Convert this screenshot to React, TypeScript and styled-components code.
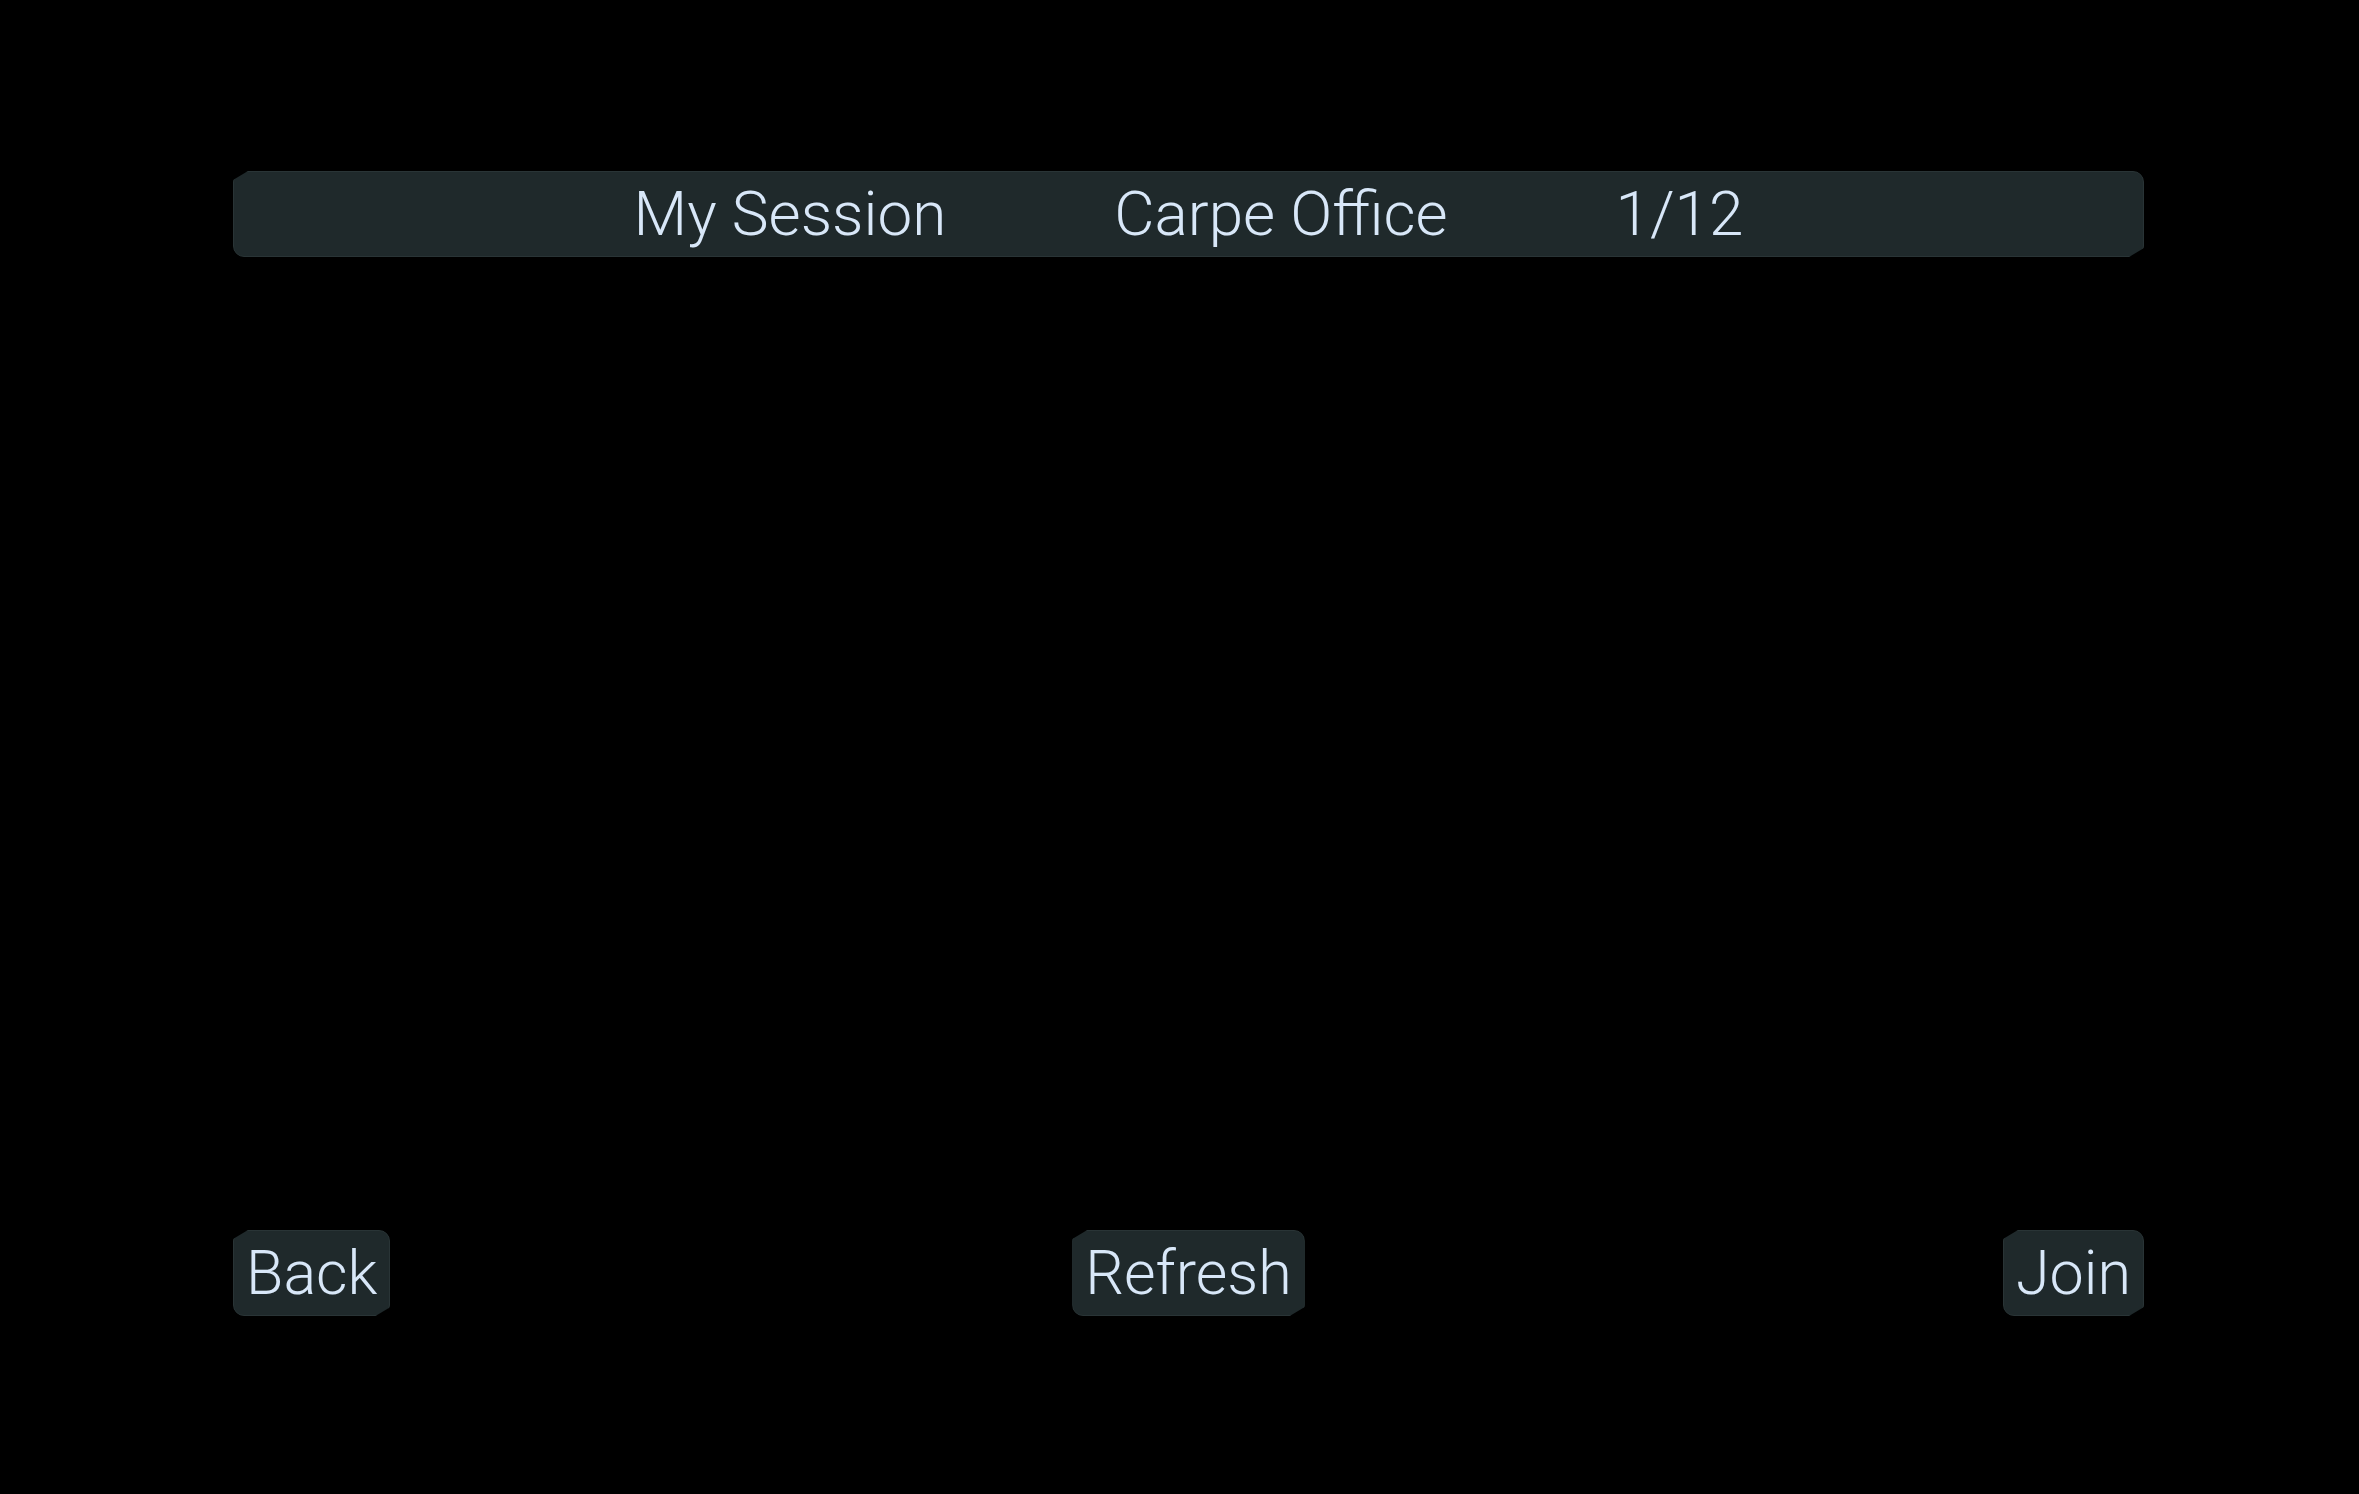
import React from "react";
import styled, { createGlobalStyle } from "styled-components";

const GlobalStyle = createGlobalStyle`
  html, body {
    margin: 0;
    padding: 0;
    background: #000000;
  }
  body {
    font-family: Roboto, "Liberation Sans", sans-serif;
  }
`;

const Page = styled.div`
  width: 2359px;
  height: 1494px;
  background: #000000;
  box-sizing: border-box;
  padding: 171px 215px 0 233px;
  display: flex;
  flex-direction: column;
`;

const Panel = styled.div<{ $cutX?: number; $cutY?: number }>`
  background: #1f292b;
  border: 1px solid #293436;
  box-sizing: border-box;
  border-radius: 11px;
  clip-path: polygon(
    ${(p) => p.$cutX ?? 15}px 0,
    100% 0,
    100% calc(100% - ${(p) => p.$cutY ?? 9}px),
    calc(100% - ${(p) => p.$cutX ?? 15}px) 100%,
    0 100%,
    0 ${(p) => p.$cutY ?? 9}px
  );
`;

const TitleBar = styled(Panel)`
  height: 86px;
  display: flex;
  align-items: center;
  justify-content: center;
  gap: 168px;
`;

const TitleText = styled.span`
  font-family: Roboto, "Liberation Sans", sans-serif;
  font-weight: 300;
  font-size: 62px;
  line-height: 1;
  color: #d8e7f8;
  white-space: nowrap;
`;

const ListArea = styled.div`
  height: 973px;
`;

const ButtonRow = styled.div`
  display: grid;
  grid-template-columns: 1fr auto 1fr;
  align-items: start;
`;

const ActionButton = styled(Panel).attrs({ as: "button" })<{
  $align: "start" | "center" | "end";
}>`
  justify-self: ${(p) => p.$align};
  height: 86px;
  padding: 0 12px;
  display: flex;
  align-items: center;
  font-family: Roboto, "Liberation Sans", sans-serif;
  font-weight: 300;
  font-size: 61px;
  line-height: 1;
  color: #d8e7f8;
  cursor: pointer;
  margin: 0;
`;

export default function App() {
  return (
    <>
      <GlobalStyle />
      <Page>
        <TitleBar>
          <TitleText>My Session</TitleText>
          <TitleText>Carpe Office</TitleText>
          <TitleText>1/12</TitleText>
        </TitleBar>
        <ListArea />
        <ButtonRow>
          <ActionButton $align="start">Back</ActionButton>
          <ActionButton $align="center">Refresh</ActionButton>
          <ActionButton $align="end">Join</ActionButton>
        </ButtonRow>
      </Page>
    </>
  );
}
